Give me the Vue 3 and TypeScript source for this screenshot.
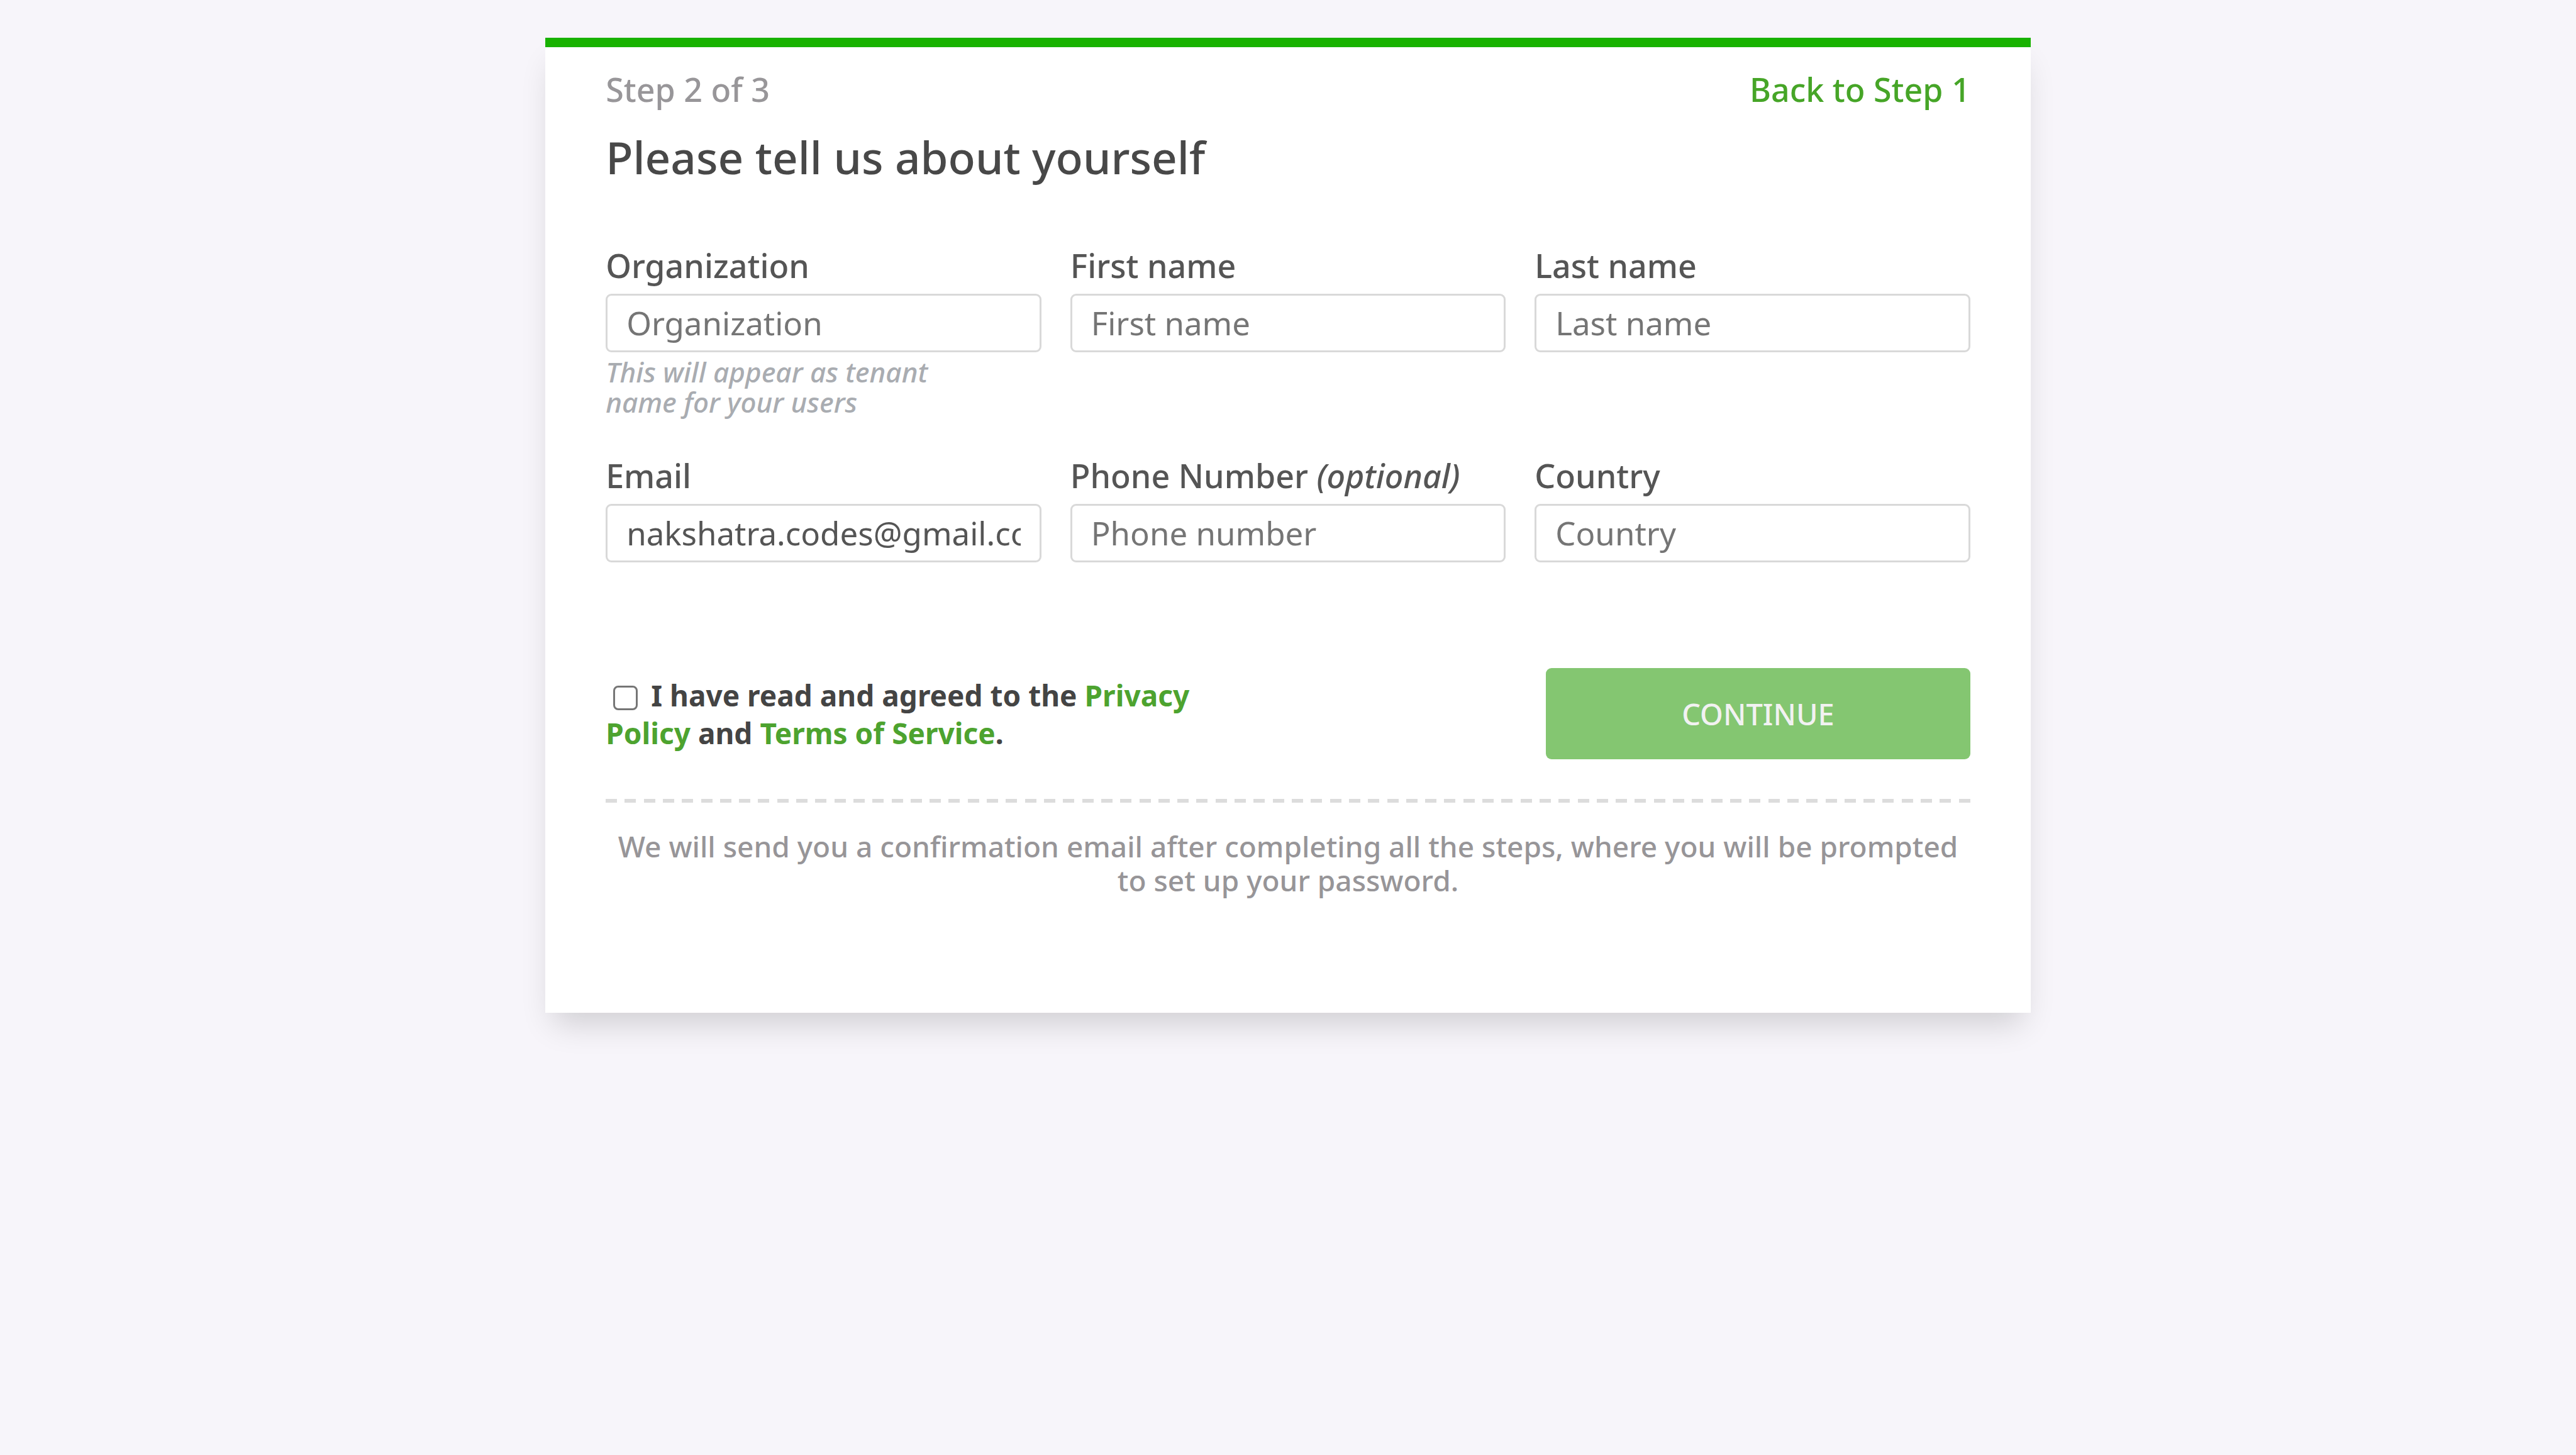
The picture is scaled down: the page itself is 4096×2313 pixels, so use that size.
<script setup lang="ts">
import { reactive, ref } from 'vue'

interface Field {
  id: string
  label: string
  placeholder: string
  type: string
  optional?: boolean
  hint?: string
}

const fields: Field[] = [
  {
    id: 'organization',
    label: 'Organization',
    placeholder: 'Organization',
    type: 'text',
    hint: 'This will appear as tenant name for your users',
  },
  { id: 'firstName', label: 'First name', placeholder: 'First name', type: 'text' },
  { id: 'lastName', label: 'Last name', placeholder: 'Last name', type: 'text' },
  { id: 'email', label: 'Email', placeholder: 'Email', type: 'email' },
  { id: 'phone', label: 'Phone Number', placeholder: 'Phone number', type: 'tel', optional: true },
  { id: 'country', label: 'Country', placeholder: 'Country', type: 'text' },
]

const form = reactive<Record<string, string>>({
  organization: '',
  firstName: '',
  lastName: '',
  email: 'nakshatra.codes@gmail.com',
  phone: '',
  country: '',
})

const agreed = ref(false)
</script>

<template>
  <main class="page">
    <form class="card" @submit.prevent>
      <header class="top">
        <span class="step">Step 2 of 3</span>
        <a class="back" href="#step-1">Back to Step 1</a>
      </header>
      <h1 class="title">Please tell us about yourself</h1>

      <div class="fields">
        <div v-for="field in fields" :key="field.id" class="field">
          <label class="label" :for="field.id">
            {{ field.label }} <em v-if="field.optional">(optional)</em>
          </label>
          <input
            :id="field.id"
            v-model="form[field.id]"
            class="input"
            :type="field.type"
            :placeholder="field.placeholder"
          />
          <p v-if="field.hint" class="hint">{{ field.hint }}</p>
        </div>
      </div>

      <div class="actions">
        <div class="terms">
          <input id="agree" v-model="agreed" class="check" type="checkbox" />
          <label for="agree">I have read and agreed to the</label>
          {{ ' ' }}<a href="#privacy"><span>Privacy</span> <span>Policy</span></a> <span>and</span>
          {{ ' ' }}<a href="#terms">Terms of Service</a><span>.</span>
        </div>
        <button class="continue" type="submit" :disabled="!agreed">CONTINUE</button>
      </div>

      <hr class="divider" />
      <p class="note">
        We will send you a confirmation email after completing all the steps, where you will be
        prompted to set up your password.
      </p>
    </form>
  </main>
</template>

<style>
body {
  margin: 0;
  background: #f7f5fa;
}
</style>

<style scoped>
.page {
  display: flex;
  justify-content: center;
  align-items: flex-start;
  min-height: 100vh;
  box-sizing: border-box;
  padding: 60px 0;
  background: #f7f5fa;
  font-family: "Noto Sans", "Open Sans", sans-serif;
  font-weight: 500;
}

.card {
  width: 57.66%;
  box-sizing: border-box;
  padding: 37px 96px 184px;
  border-top: 15px solid #18b200;
  background: #fff;
  box-shadow: 0 30px 48px -13px rgba(0, 0, 0, 0.16);
}

.top {
  display: flex;
  justify-content: space-between;
  font-size: 52px;
  line-height: 60px;
}

.step {
  color: #989699;
}

.back {
  color: #46a527;
  text-decoration: none;
}

.title {
  margin: 36px 0 100px;
  color: #484848;
  font-size: 71px;
  font-weight: 500;
  line-height: 84px;
}

.fields {
  display: grid;
  grid-template-columns: repeat(3, minmax(0, 1fr));
  gap: 63px 46px;
}

.label {
  display: block;
  margin-bottom: 15px;
  color: #555;
  font-size: 52px;
  line-height: 60px;
}

.input {
  display: block;
  width: 100%;
  height: 93px;
  box-sizing: border-box;
  margin: 0;
  padding: 0 30px 2px;
  border: 3px solid #d9d9d9;
  border-radius: 9px;
  outline: none;
  background: #fff;
  color: #555;
  font-family: inherit;
  font-size: 51px;
  font-weight: 400;
}

.input::placeholder {
  color: #757575;
  opacity: 1;
}

.hint {
  max-width: 80%;
  margin: 7px 0 0;
  color: #a9acb1;
  font-size: 44px;
  font-style: italic;
  line-height: 48px;
}

.actions {
  display: flex;
  justify-content: space-between;
  align-items: center;
  margin-top: 168px;
}

.terms {
  width: 46%;
  color: #444;
  font-size: 46px;
  font-weight: 700;
  line-height: 60px;
}

.terms a {
  color: #4da32f;
  text-decoration: none;
}

.check {
  appearance: none;
  box-sizing: border-box;
  width: 39px;
  height: 39px;
  margin: 0 21px 0 12px;
  border: 3px solid #767676;
  border-radius: 8px;
  background: #fff;
  vertical-align: -6px;
}

.check:checked {
  background: #46a527;
}

.continue {
  width: 31.1%;
  height: 145px;
  padding: 0;
  border: 0;
  border-radius: 9px;
  background: #84c671;
  color: #f2f2f2;
  font-family: inherit;
  font-size: 47px;
  font-weight: 500;
}

/* 72 evenly spread dashes, the last one ending flush with the right edge */
.divider {
  height: 6px;
  margin: 63px 0 42px;
  border: 0;
  background: repeating-linear-gradient(
    90deg,
    #dcdcdc 0 18px,
    transparent 18px calc((100% + 12px) / 72)
  );
}

.note {
  margin: 0;
  color: #979598;
  font-size: 46px;
  line-height: 54px;
  text-align: center;
}
</style>
